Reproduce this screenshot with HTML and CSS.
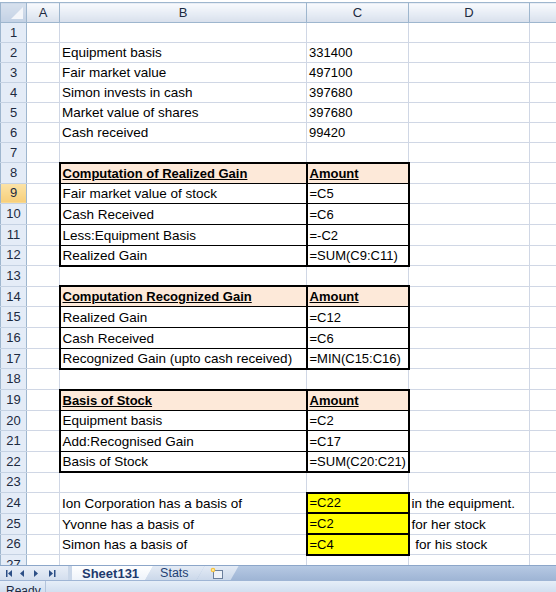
FILE: index.html
```html
<!DOCTYPE html>
<html lang="en">
<head>
    <meta charset="UTF-8">
    <title>Sheet131</title>
    <link rel="stylesheet" href="styles.css">
</head>
<body>
<div class="window">
    <div class="grid-area">
        <table class="sheet">
            <colgroup>
                <col class="w-hdr"><col class="w-a"><col class="w-b"><col class="w-c"><col class="w-d"><col class="w-e">
            </colgroup>
            <thead>
                <tr class="col-heads">
                    <th class="corner"><span class="corner-mark"></span></th>
                    <th>A</th><th>B</th><th>C</th><th>D</th><th></th>
                </tr>
            </thead>
            <tbody>
                <tr class="top-row"><th>1</th><td></td><td></td><td></td><td></td><td></td></tr>
                <tr class="top-row"><th>2</th><td></td><td>Equipment basis</td><td>331400</td><td></td><td></td></tr>
                <tr class="top-row"><th>3</th><td></td><td>Fair market value</td><td>497100</td><td></td><td></td></tr>
                <tr class="top-row"><th>4</th><td></td><td>Simon invests in cash</td><td>397680</td><td></td><td></td></tr>
                <tr class="top-row"><th>5</th><td></td><td>Market value of shares</td><td>397680</td><td></td><td></td></tr>
                <tr class="top-row"><th>6</th><td></td><td>Cash received</td><td>99420</td><td></td><td></td></tr>
                <tr class="top-row"><th>7</th><td></td><td></td><td></td><td></td><td></td></tr>

                <tr><th>8</th><td></td><td class="box head l t">Computation of Realized Gain</td><td class="box head r t">Amount</td><td></td><td></td></tr>
                <tr><th class="active">9</th><td></td><td class="box l">Fair market value of stock</td><td class="box r">=C5</td><td></td><td></td></tr>
                <tr><th>10</th><td></td><td class="box l">Cash Received</td><td class="box r">=C6</td><td></td><td></td></tr>
                <tr><th>11</th><td></td><td class="box l">Less:Equipment Basis</td><td class="box r">=-C2</td><td></td><td></td></tr>
                <tr><th>12</th><td></td><td class="box l b">Realized Gain</td><td class="box r b">=SUM(C9:C11)</td><td></td><td></td></tr>
                <tr><th>13</th><td></td><td></td><td></td><td></td><td></td></tr>

                <tr><th>14</th><td></td><td class="box head l t">Computation Recognized Gain</td><td class="box head r t">Amount</td><td></td><td></td></tr>
                <tr><th>15</th><td></td><td class="box l">Realized Gain</td><td class="box r">=C12</td><td></td><td></td></tr>
                <tr><th>16</th><td></td><td class="box l">Cash Received</td><td class="box r">=C6</td><td></td><td></td></tr>
                <tr><th>17</th><td></td><td class="box l b">Recognized Gain (upto cash received)</td><td class="box r b">=MIN(C15:C16)</td><td></td><td></td></tr>
                <tr><th>18</th><td></td><td></td><td></td><td></td><td></td></tr>

                <tr><th>19</th><td></td><td class="box head l t">Basis of Stock</td><td class="box head r t">Amount</td><td></td><td></td></tr>
                <tr><th>20</th><td></td><td class="box l">Equipment basis</td><td class="box r">=C2</td><td></td><td></td></tr>
                <tr><th>21</th><td></td><td class="box l">Add:Recognised Gain</td><td class="box r">=C17</td><td></td><td></td></tr>
                <tr><th>22</th><td></td><td class="box l b">Basis of Stock</td><td class="box r b">=SUM(C20:C21)</td><td></td><td></td></tr>
                <tr><th>23</th><td></td><td></td><td></td><td></td><td></td></tr>

                <tr><th>24</th><td></td><td>Ion Corporation has a basis of</td><td class="hilite">=C22</td><td>in the equipment.</td><td></td></tr>
                <tr><th>25</th><td></td><td>Yvonne has a basis of</td><td class="hilite">=C2</td><td>for her stock</td><td></td></tr>
                <tr><th>26</th><td></td><td>Simon has a basis of</td><td class="hilite">=C4</td><td>&nbsp;for his stock</td><td></td></tr>
                <tr><th>27</th><td></td><td></td><td></td><td></td><td></td></tr>
            </tbody>
        </table>
    </div>

    <div class="tab-bar">
        <div class="tab-nav">
            <svg width="68" height="15" viewBox="0 0 68 15">
                <g fill="#2d4f86">
                    <rect x="6" y="4" width="1.5" height="7"/>
                    <polygon points="8,7.5 12,4 12,11"/>
                    <polygon points="20,7.5 24,4 24,11"/>
                    <polygon points="38,7.5 34,4 34,11"/>
                    <polygon points="53,7.5 49,4 49,11"/>
                    <rect x="54" y="4" width="1.5" height="7"/>
                </g>
            </svg>
        </div>
        <div class="tabs">
            <div class="tab current">Sheet131</div>
            <div class="tab">Stats</div>
            <div class="tab add">
                <svg width="16" height="13" viewBox="0 0 16 13">
                    <rect x="4.5" y="3.5" width="9" height="8" fill="#eef2f8" stroke="#6b7f9c"/>
                    <circle cx="4" cy="3" r="2.3" fill="#f5c242"/>
                    <circle cx="4" cy="3" r="1" fill="#fff3b0"/>
                </svg>
            </div>
        </div>
    </div>

    <div class="status-bar">
        <span class="status-text">Ready</span>
    </div>
</div>
</body>
</html>
```

FILE: styles.css
```css
body{
    margin: 0;
    overflow: hidden;
    background: #ffffff;
}

.window{
    display: flex;
    flex-direction: column;
    width: 556px;
    height: 592px;
    overflow: hidden;
    font-family: "Liberation Sans", Arial, sans-serif;
}

/* grid of cells */
.grid-area{
    height: 565px;
    flex-shrink: 0;
    overflow: hidden;
    padding-top: 2px;
    box-sizing: border-box;
}

.sheet{
    border-collapse: collapse;
    table-layout: fixed;
    width: 589px;
    font-size: 13.5px;
    color: #000000;
}

.w-hdr{ width: 26px; }
.w-a{ width: 33px; }
.w-b{ width: 247px; }
.w-c{ width: 102px; }
.w-d{ width: 121px; }
.w-e{ width: 60px; }

.sheet tr{
    height: 20.65px;
}
.sheet tr.top-row,
.sheet tr.col-heads{
    height: 20px;
}

.sheet td{
    padding: 0 2px 1px 2px;
    border: 1px solid #d0d7e5;
    vertical-align: bottom;
    white-space: nowrap;
    overflow: visible;
    line-height: 16px;
}
/* column C holds numbers and formulas, a bit narrower */
.sheet td:nth-child(4){
    font-size: 13px;
}

/* column + row headings */
.col-heads th{
    padding: 0;
    font-weight: normal;
    font-size: 13px;
    line-height: 16px;
    color: #1c2a40;
    text-align: center;
    border: 1px solid #9eb6ce;
    background: linear-gradient(#f8fafd, #e5ebf4 60%, #d8e0ec);
}

.sheet tbody th{
    padding: 0;
    font-weight: normal;
    font-size: 13px;
    line-height: 16px;
    color: #1c2a40;
    text-align: center;
    vertical-align: middle;
    background: #e4ecf7;
    border: 1px solid #9eb6ce;
    border-top-color: #c5d2e3;
    border-bottom-color: #c5d2e3;
}
.sheet tbody th.active{
    background: linear-gradient(#fbe3a8, #f7cf7a);
}

.corner{
    position: relative;
}
.corner-mark{
    position: absolute;
    right: 3px;
    bottom: 3px;
    width: 0;
    height: 0;
    border-left: 12px solid transparent;
    border-bottom: 12px solid #f4f6fa;
}
.col-heads .corner{
    background: linear-gradient(#d7e1ee, #c3d1e4);
}

/* boxed tables */
.box{
    border: 1px solid #000000 !important;
}
.box.l{ border-left: 2px solid #000000 !important; }
.box.r{ border-left: 2px solid #000000 !important; border-right: 2px solid #000000 !important; }
.box.t{ border-top: 2px solid #000000 !important; }
.box.b{ border-bottom: 2px solid #000000 !important; }

.head{
    background: #fde9d9;
    font-size: 13px;
    font-weight: bold;
    text-decoration: underline;
}

.hilite{
    background: #ffff00;
    border: 2px solid #000000 !important;
}

/* sheet tabs */
.tab-bar{
    display: flex;
    flex-shrink: 0;
    height: 15px;
    background: linear-gradient(#b6c9e3, #9fb5d5);
    border-top: 1px solid #8ca6c9;
    box-sizing: border-box;
}

.tab-nav{
    width: 68px;
    background: linear-gradient(#e8eef7, #d3deee);
    border-right: 4px solid #c9d6e8;
    display: flex;
    align-items: center;
}

.tabs{
    display: flex;
    align-items: stretch;
}

.tab{
    display: flex;
    align-items: center;
    padding: 0 16px 0 15px;
    margin-right: -8px;
    font-size: 12.5px;
    line-height: 13px;
    color: #1f3f74;
    background: linear-gradient(#e4ebf5, #cbd8ea);
    clip-path: polygon(0 100%, 8px 0, 100% 0, calc(100% - 8px) 100%);
}
.tab.current{
    position: relative;
    z-index: 2;
    padding: 0 14px 0 10px;
    font-size: 13px;
    font-weight: bold;
    color: #1e3a6e;
    background: linear-gradient(#ffffff, #eef3fa);
    clip-path: polygon(0 0, 100% 0, calc(100% - 8px) 100%, 0 100%);
}
.tab.add{
    padding: 0 14px 0 12px;
}

/* status bar */
.status-bar{
    height: 12px;
    flex-shrink: 0;
    overflow: hidden;
    background: linear-gradient(#e6eef8, #d2dff0);
    border-top: 1px solid #9fb5d5;
    box-sizing: border-box;
    display: flex;
}
.status-text{
    width: 46px;
    padding: 3px 0 0 6px;
    font-size: 12px;
    line-height: 14px;
    color: #1c2a40;
    border-right: 1px solid #b3c4dc;
    box-sizing: border-box;
}
```
